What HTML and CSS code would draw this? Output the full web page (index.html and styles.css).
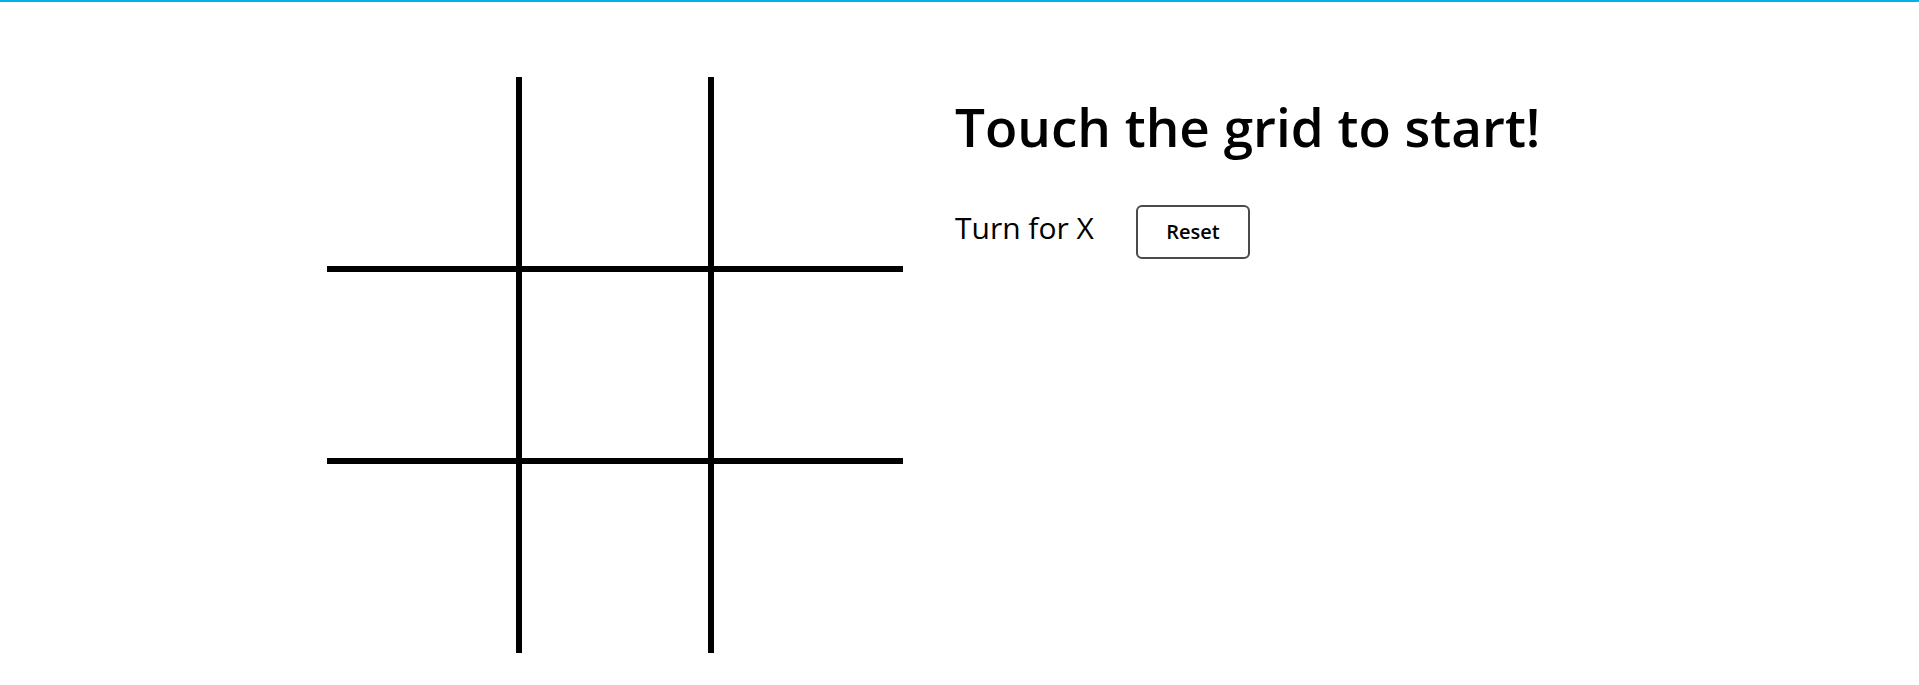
FILE: index.html
```html
<!DOCTYPE html>
<html lang="en">
<head>
<meta charset="utf-8">
<title>Tic Tac Toe</title>
<link rel="stylesheet" href="styles.css">
</head>
<body>
<main class="page">
  <div class="board">
    <div class="cell"></div>
    <div class="cell"></div>
    <div class="cell"></div>
    <div class="cell"></div>
    <div class="cell"></div>
    <div class="cell"></div>
    <div class="cell"></div>
    <div class="cell"></div>
    <div class="cell"></div>
  </div>
  <section class="info">
    <h1 class="title">Touch the grid to start!</h1>
    <div class="status-row">
      <span class="turn">Turn for X</span>
      <button class="reset" type="button">Reset</button>
    </div>
  </section>
</main>
</body>
</html>
```
FILE: styles.css
```css
html, body {
  margin: 0;
  padding: 0;
  background: #fff;
}

body {
  border-top: 2px solid #02b1ea;
  font-family: "Open Sans", "Noto Sans", sans-serif;
  color: #000;
}

.page {
  display: flex;
  align-items: flex-start;
  gap: 52px;
  padding: 75px 0 0 327px;
}

.board {
  display: grid;
  grid-template-columns: repeat(3, 192px);
  grid-template-rows: repeat(3, 192px);
  flex: none;
}

.cell {
  box-sizing: border-box;
  border: 0 solid #000;
}

.cell:nth-child(3n+1) { border-right-width: 3px; }
.cell:nth-child(3n+2) { border-left-width: 3px; border-right-width: 3px; }
.cell:nth-child(3n) { border-left-width: 3px; }

.cell:nth-child(-n+3) { border-bottom-width: 3px; }
.cell:nth-child(n+4):nth-child(-n+6) { border-top-width: 3px; border-bottom-width: 3px; }
.cell:nth-child(n+7) { border-top-width: 3px; }

.info {
  padding-top: 18px;
}

.title {
  margin: 0;
  font-size: 53px;
  line-height: 1.2;
  font-weight: 600;
}

.status-row {
  display: flex;
  align-items: baseline;
  gap: 42px;
  margin-top: 46px;
}

.turn {
  font-size: 30px;
  font-weight: 400;
}

.reset {
  box-sizing: border-box;
  width: 114px;
  height: 54px;
  border: 2px solid #4a4a4a;
  border-radius: 6px;
  background: #fff;
  color: #000;
  font-family: inherit;
  font-size: 20px;
  font-weight: 600;
  cursor: pointer;
}
```
